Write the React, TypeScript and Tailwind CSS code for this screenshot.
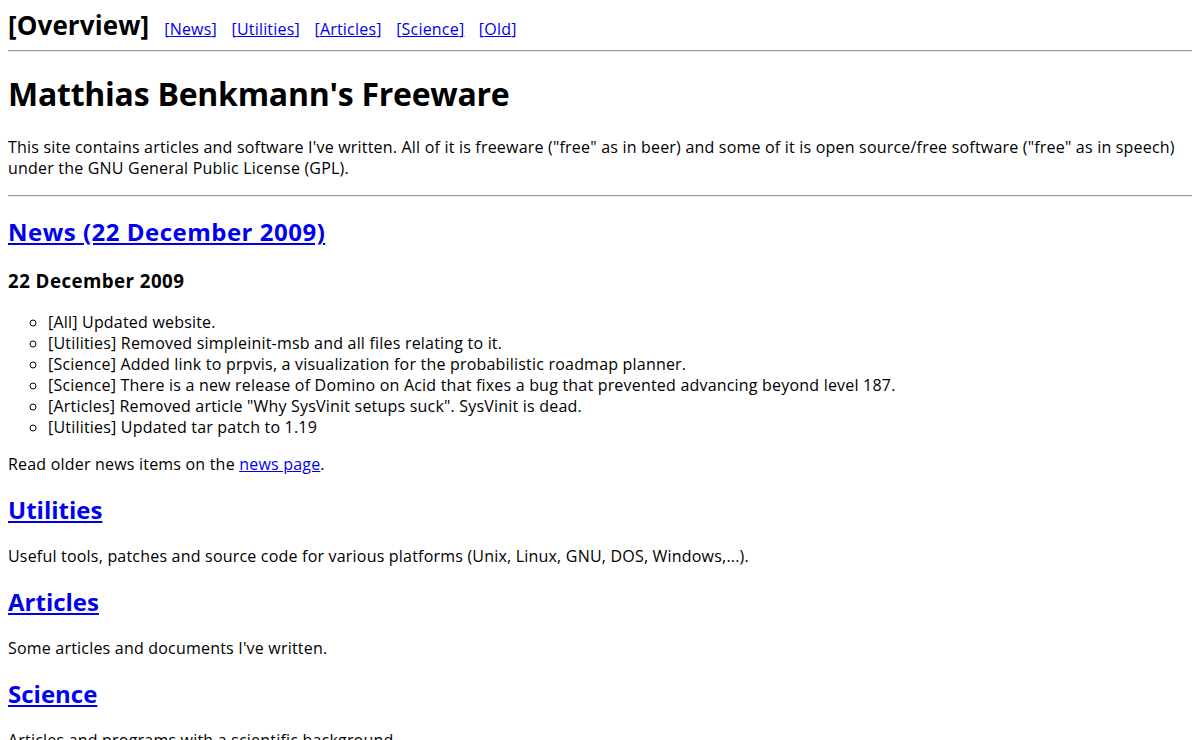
const navLinks = ['News', 'Utilities', 'Articles', 'Science', 'Old'];

const news = [
  '[All] Updated website.',
  '[Utilities] Removed simpleinit-msb and all files relating to it.',
  '[Science] Added link to prpvis, a visualization for the probabilistic roadmap planner.',
  '[Science] There is a new release of Domino on Acid that fixes a bug that prevented advancing beyond level 187.',
  '[Articles] Removed article "Why SysVinit setups suck". SysVinit is dead.',
  '[Utilities] Updated tar patch to 1.19',
];

const sections = [
  { title: 'Utilities', text: 'Useful tools, patches and source code for various platforms (Unix, Linux, GNU, DOS, Windows,...).' },
  { title: 'Articles', text: "Some articles and documents I've written." },
  { title: 'Science', text: 'Articles and programs with a scientific background.' },
];

function Rule() {
  return <hr className="my-2 border-0 border-t border-b border-t-[#9a9a9a] border-b-[#eeeeee]" />;
}

function SectionHeading({ children, wide }: { children: React.ReactNode; wide?: boolean }) {
  return (
    <h2 className={wide ? 'my-[19.5px] text-[24px] font-bold leading-[32px] tracking-[0.5px]' : 'my-[19.5px] text-[24px] font-bold leading-[32px] tracking-normal'}>
      <a href="#" className="text-[#0000ee] underline">
        {children}
      </a>
    </h2>
  );
}

export default function App() {
  return (
    <div className="min-h-screen bg-white p-2 text-[16px] leading-[21px] tracking-[0.2px] text-black [font-family:'Open_Sans','Noto_Sans',sans-serif]">
      <div className="flex h-[34px] items-baseline">
        <span className="text-[26px] font-bold leading-[34px] tracking-[0.1px]">[Overview]</span>
        {navLinks.map((l, i) => (
          <a key={l} href="#" className={i === 0 ? 'ml-[15px] text-[#0000ee] underline' : 'ml-[14.5px] text-[#0000ee] underline'}>
            [{l}]
          </a>
        ))}
      </div>
      <Rule />
      <h1 className="my-[21.44px] text-[32px] font-bold leading-[42px] tracking-[-0.25px]">Matthias Benkmann's Freeware</h1>
      <p className="my-4">
        This site contains articles and software I've written. All of it is freeware ("free" as in beer) and some of
        it is open source/free software ("free" as in speech) under the GNU General Public License (GPL).
      </p>
      <Rule />
      <SectionHeading wide>News (22 December 2009)</SectionHeading>
      <h3 className="my-[18.72px] text-[18.72px] font-bold leading-[25px] tracking-[0.45px]">22 December 2009</h3>
      <ul className="my-4 list-[circle] pl-10">
        {news.map((n) => (
          <li key={n}>{n}</li>
        ))}
      </ul>
      <p className="my-4">
        Read older news items on the{' '}
        <a href="#" className="text-[#0000ee] underline">
          news page
        </a>
        .
      </p>
      {sections.map((s) => (
        <div key={s.title}>
          <SectionHeading>{s.title}</SectionHeading>
          <p className="my-4">{s.text}</p>
        </div>
      ))}
    </div>
  );
}
